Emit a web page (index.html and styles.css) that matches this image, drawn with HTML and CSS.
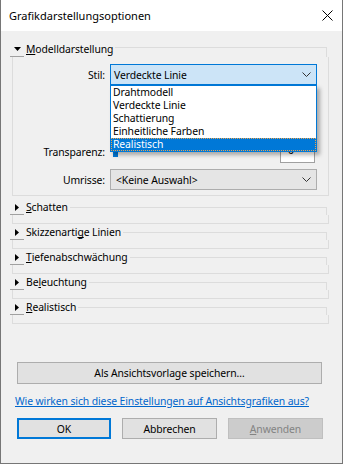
FILE: index.html
```html
<!DOCTYPE html>
<html lang="de">
<head>
  <meta charset="UTF-8">
  <meta name="viewport" content="width=device-width, initial-scale=1.0">
  <title>Grafikdarstellungsoptionen</title>
  <link rel="stylesheet" href="styles.css">
</head>
<body>
  <div class="window">
    <div class="titlebar">
      <span class="title">Grafikdarstellungsoptionen</span>
      <svg class="close" width="11" height="11" viewBox="0 0 11 11"><path d="M0.5 0.5L10.5 10.5M10.5 0.5L0.5 10.5" stroke="#000" stroke-width="1" fill="none"/></svg>
    </div>

    <div class="content">
      <!-- Modelldarstellung (aufgeklappt) -->
      <div class="section open">
        <div class="head">
          <span class="toggle"><svg width="7" height="4" viewBox="0 0 7 4"><path d="M0 0H7L3.5 4Z" fill="#000"/></svg></span>
          <span class="label"><u>M</u>odelldarstellung</span>
          <span class="rule"></span>
        </div>
        <div class="box">
          <div class="row">
            <span class="key">Stil:</span>
            <div class="select active">
              <span>Verdeckte Linie</span>
              <svg width="9" height="5" viewBox="0 0 9 5"><path d="M0.5 0.5L4.5 4.5L8.5 0.5" stroke="#333" fill="none"/></svg>
            </div>
          </div>
          <div class="row transp">
            <span class="key">Transparenz:</span>
            <div class="slider"><span class="thumb"></span></div>
            <div class="value">0</div>
          </div>
          <div class="row outline">
            <span class="key">Umrisse:</span>
            <div class="select">
              <span>&lt;Keine Auswahl&gt;</span>
              <svg width="9" height="5" viewBox="0 0 9 5"><path d="M0.5 0.5L4.5 4.5L8.5 0.5" stroke="#333" fill="none"/></svg>
            </div>
          </div>
        </div>
      </div>

      <div class="section">
        <div class="head">
          <span class="toggle"><svg width="4" height="7" viewBox="0 0 4 7"><path d="M0 0V7L4 3.5Z" fill="#000"/></svg></span>
          <span class="label"><u>S</u>chatten</span>
          <span class="rule"></span>
        </div>
        <div class="box"></div>
      </div>

      <div class="section">
        <div class="head">
          <span class="toggle"><svg width="4" height="7" viewBox="0 0 4 7"><path d="M0 0V7L4 3.5Z" fill="#000"/></svg></span>
          <span class="label">Skizzenarti<u>g</u>e Linien</span>
          <span class="rule"></span>
        </div>
        <div class="box"></div>
      </div>

      <div class="section">
        <div class="head">
          <span class="toggle"><svg width="4" height="7" viewBox="0 0 4 7"><path d="M0 0V7L4 3.5Z" fill="#000"/></svg></span>
          <span class="label"><u>T</u>iefenabschwächung</span>
          <span class="rule"></span>
        </div>
        <div class="box"></div>
      </div>

      <div class="section">
        <div class="head">
          <span class="toggle"><svg width="4" height="7" viewBox="0 0 4 7"><path d="M0 0V7L4 3.5Z" fill="#000"/></svg></span>
          <span class="label">Be<u>l</u>euchtung</span>
          <span class="rule"></span>
        </div>
        <div class="box"></div>
      </div>

      <div class="section">
        <div class="head">
          <span class="toggle"><svg width="4" height="7" viewBox="0 0 4 7"><path d="M0 0V7L4 3.5Z" fill="#000"/></svg></span>
          <span class="label"><u>R</u>ealistisch</span>
          <span class="rule"></span>
        </div>
        <div class="box"></div>
      </div>

      <div class="footer">
        <button type="button" class="btn wide">Als Ansichtsvorlage speichern…</button>
        <a class="help" href="#">Wie wirken sich diese Einstellungen auf Ansichtsgrafiken aus?</a>
        <div class="actions">
          <button type="button" class="btn default">OK</button>
          <button type="button" class="btn">Abbrechen</button>
          <button type="button" class="btn disabled"><u>A</u>nwenden</button>
        </div>
      </div>
    </div>

    <!-- geöffnete Auswahlliste von "Stil" -->
    <ul class="dropdown">
      <li>Drahtmodell</li>
      <li>Verdeckte Linie</li>
      <li>Schattierung</li>
      <li>Einheitliche Farben</li>
      <li class="selected"><span>Realistisch</span></li>
    </ul>
  </div>
</body>
</html>
```

FILE: styles.css
```css
body {
  margin: 0;
  font-family: "Noto Sans", "Liberation Sans", sans-serif;
  font-size: 10.4px;
  letter-spacing: -0.1px;
  color: #000;
}
u {
  text-decoration-skip-ink: none;
}
.window {
  position: relative;
  width: 343px;
  height: 464px;
  box-sizing: border-box;
  border: 1px solid #767676;
  border-top: none;
  background-color: #f0f0f0;
}
.titlebar {
  display: flex;
  align-items: center;
  height: 31px;
  padding: 0 9px 0 8px;
  background-color: #fff;
}
.title {
  flex: 1;
  font-size: 11px;
  letter-spacing: 0;
}
.close {
  display: block;
}
.content {
  padding: 11px 0 0 9px;
}

/* Abschnitte */
.head {
  display: flex;
  width: 317px;
  height: 15px;
}
.toggle {
  display: flex;
  align-items: center;
  justify-content: center;
  width: 14px;
  height: 14px;
  border-bottom: 1px solid #a0a0a0;
}
.toggle svg {
  display: block;
}
.label {
  margin-left: 2px;
  line-height: 15px;
  white-space: nowrap;
}
.rule {
  flex: 1;
  margin-top: 7px;
  margin-left: 2px;
  border-top: 1px solid #dcdcdc;
  border-right: 1px solid #dcdcdc;
}
.box {
  width: 315px;
  height: 8px;
  margin-left: 2px;
  box-sizing: content-box;
  border: 1px solid #dcdcdc;
  border-top: none;
}
.section {
  margin-bottom: 1px;
}
.section.open {
  margin-bottom: 4px;
}
.section.open .rule {
  margin-top: 5px;
}
.section.open .box {
  width: 304px;
  height: auto;
  padding: 7px 11px 5px 0;
}

.row {
  display: flex;
  align-items: center;
  height: 21px;
}
.key {
  width: 92px;
  padding-right: 5px;
  text-align: right;
}
.select {
  display: flex;
  align-items: center;
  justify-content: space-between;
  width: 207px;
  height: 21px;
  box-sizing: border-box;
  padding: 0 5px 0 5px;
  border: 1px solid #adadad;
  background-color: #e5e5e5;
}
.select.active {
  padding-left: 3px;
  border-color: #0078d7;
  background-color: #cce4f7;
}
.transp {
  margin-top: 56px;
}
.slider {
  position: relative;
  flex: 1;
  height: 21px;
}
.thumb {
  position: absolute;
  left: 3px;
  top: 5px;
  width: 5px;
  height: 11px;
  background-color: #0078d7;
}
.value {
  width: 35px;
  height: 22px;
  box-sizing: border-box;
  margin: 1px 2px 0 0;
  padding-left: 7px;
  line-height: 16px;
  border: 1px solid #a0a0a0;
  background-color: #fff;
}
.outline {
  margin-top: 7px;
}

/* Auswahlliste */
.dropdown {
  position: absolute;
  left: 109px;
  top: 85px;
  width: 207px;
  box-sizing: border-box;
  margin: 0;
  padding: 0;
  list-style: none;
  border: 1px solid #0078d7;
  background-color: #fff;
  box-shadow: 3px 3px 4px rgba(0, 0, 0, 0.3);
}
.dropdown li {
  height: 13px;
  padding-left: 2px;
  line-height: 13px;
}
.dropdown li.selected {
  padding-left: 0;
  background-color: #0078d7;
  color: #fff;
}
.dropdown li.selected span {
  display: block;
  height: 11px;
  padding-left: 1px;
  line-height: 11px;
  border: 1px dotted #e9a34f;
}

/* Fuß */
.footer {
  margin-top: 38px;
  padding-left: 7px;
}
.btn {
  display: block;
  height: 22px;
  padding: 0;
  font-family: inherit;
  font-size: 10.4px;
  letter-spacing: -0.1px;
  color: #000;
  border: 1px solid #adadad;
  background-color: #e1e1e1;
}
.btn.wide {
  width: 305px;
}
.help {
  display: block;
  margin: 10px 0 0 -2px;
  line-height: 15px;
  color: #0066cc;
}
.actions {
  display: flex;
  gap: 11px;
  margin-top: 9px;
}
.actions .btn {
  width: 95px;
  height: 21px;
}
.btn.default {
  width: 94px;
  border: 2px solid #0078d7;
}
.btn.disabled {
  color: #838383;
  border-color: #bfbfbf;
  background-color: #cccccc;
}
```
